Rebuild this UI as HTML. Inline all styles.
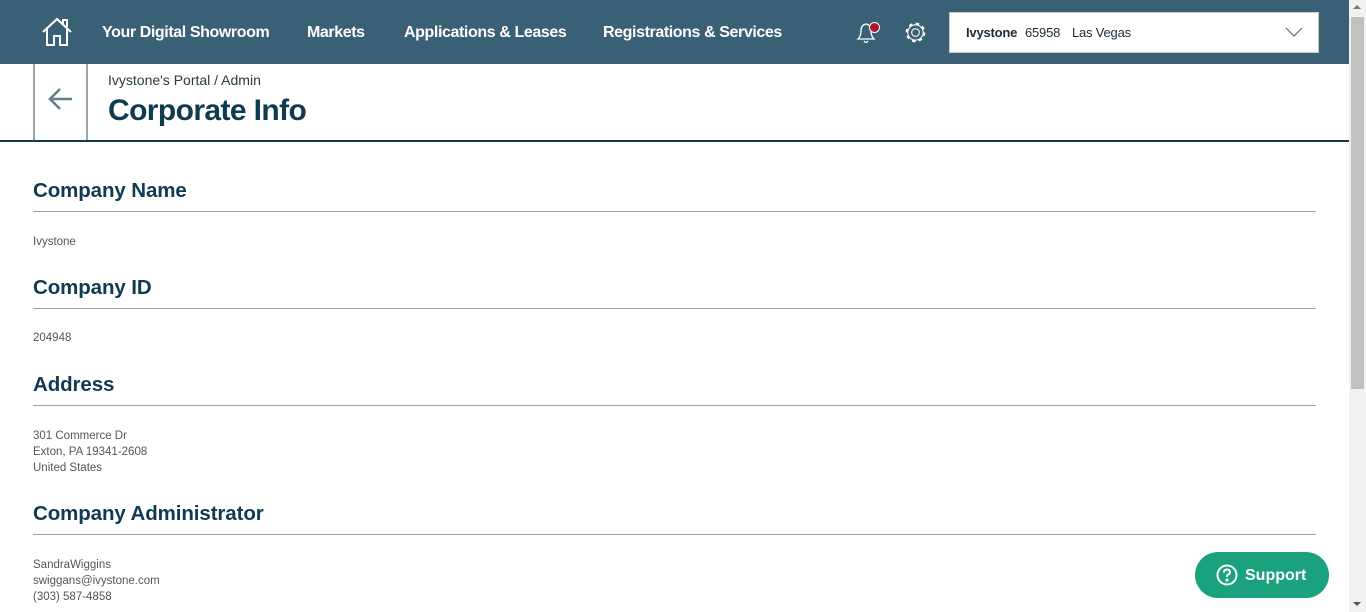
<!DOCTYPE html>
<html><head><meta charset="utf-8"><style>
*{margin:0;padding:0;box-sizing:border-box}
body{width:1366px;height:612px;overflow:hidden;font-family:"Liberation Sans",sans-serif;background:#fff;position:relative}
.hdr{position:absolute;left:0;top:0;width:1349px;height:64px;background:#3a6075}
.nav{position:absolute;top:24px;color:#fff;font-size:16px;font-weight:bold;letter-spacing:-0.4px;white-space:nowrap}
.sel{position:absolute;left:949px;top:12px;width:370px;height:41px;background:#fff;border:1px solid #ccc}
.sel span{position:absolute;top:12px;font-size:13px;color:#1c2b36;letter-spacing:-0.2px}
.sb{position:absolute;left:1349px;top:0;width:17px;height:612px;background:#f1f1f1}
.thumb{position:absolute;left:1351px;top:17px;width:13px;height:372px;background:#c1c1c1}
.tb{position:absolute;left:0;top:64px;width:1349px;height:78px;border-bottom:2px solid #0f3b50}
.back{position:absolute;left:33px;top:0;width:55px;height:76px;border-left:2px solid #9aa5ab;border-right:2px solid #9aa5ab}
h2{position:absolute;left:33px;font-size:20.5px;color:#0f3b50;font-weight:bold;letter-spacing:-0.1px}
.ln{position:absolute;left:33px;width:1283px;height:1px;background:#9ca3a7}
.tx{position:absolute;left:33px;font-size:11.5px;color:#555;line-height:16px}
.sup{position:absolute;left:1195px;top:552px;width:134px;height:46px;border-radius:23px;background:#1aa27c;color:#fff;font-weight:bold;font-size:16px}
</style></head><body>
<div class="hdr">
<svg style="position:absolute;left:41px;top:17px" width="32" height="30" viewBox="0 0 32 30" fill="none" stroke="#fff" stroke-width="2"><path d="M2 15 L16 2 L30 15 M6 12 V28 H13 V19 H19 V28 H26 V12 M22 7 V3 H26 V10"/></svg>
<div class="nav" style="left:102px">Your Digital Showroom</div>
<div class="nav" style="left:307px">Markets</div>
<div class="nav" style="left:404px">Applications &amp; Leases</div>
<div class="nav" style="left:603px">Registrations &amp; Services</div>
<svg style="position:absolute;left:855px;top:21px" width="26" height="24" viewBox="0 0 26 24" fill="none" stroke="#fff" stroke-width="1.3"><path d="M3 18 Q6 15 6 10 Q6 4 11 3 Q16 4 16 10 Q16 15 19 18 Z M9 20 Q11 23 13 20"/></svg>
<div style="position:absolute;left:869px;top:22px;width:11px;height:11px;border-radius:50%;background:#a5172a;border:1px solid #fff"></div>
<svg style="position:absolute;left:904px;top:21px" width="23" height="23" viewBox="0 0 24 24" fill="none" stroke="#fff"><circle cx="12" cy="12" r="4" stroke-width="1.1"/><circle cx="12" cy="12" r="8" stroke-width="1.1"/><circle cx="12" cy="12" r="9.3" stroke-width="2" stroke-dasharray="3.6 3.7" fill="none"/></svg>
<div class="sel"><span style="left:16px;font-weight:bold">Ivystone</span><span style="left:75px">65958</span><span style="left:122px">Las Vegas</span>
<svg style="position:absolute;left:335px;top:13px" width="18" height="12" viewBox="0 0 18 12" fill="none" stroke="#666" stroke-width="1.2"><path d="M1 2 L9 10 L17 2"/></svg></div>
</div>
<div class="sb"></div><div class="thumb"></div>
<div style="position:absolute;left:1353px;top:5px;width:0;height:0;border-left:4px solid transparent;border-right:4px solid transparent;border-bottom:4px solid #777"></div>
<div style="position:absolute;left:1353px;top:602px;width:0;height:0;border-left:4px solid transparent;border-right:4px solid transparent;border-top:4px solid #555"></div>
<div class="tb">
<div class="back"><svg style="position:absolute;left:13px;top:22px" width="26" height="26" viewBox="0 0 26 26" fill="none" stroke="#627d8b" stroke-width="2.5"><path d="M24 13 H3 M12 3 L2 13 L12 23"/></svg></div>
<div style="position:absolute;left:108px;top:8px;font-size:14px;color:#2a3a44">Ivystone's Portal / Admin</div>
<div style="position:absolute;left:108px;top:30px;font-size:30px;font-weight:bold;color:#0f3b50;letter-spacing:-0.6px">Corporate Info</div>
</div>
<h2 style="top:179px">Company Name</h2><div class="ln" style="top:211px"></div>
<div class="tx" style="top:234px">Ivystone</div>
<h2 style="top:276px">Company ID</h2><div class="ln" style="top:308px"></div>
<div class="tx" style="top:330px">204948</div>
<h2 style="top:373px">Address</h2><div class="ln" style="top:405px"></div>
<div class="tx" style="top:428px">301 Commerce Dr<br>Exton, PA 19341-2608<br>United States</div>
<h2 style="top:502px">Company Administrator</h2><div class="ln" style="top:534px"></div>
<div class="tx" style="top:557px">SandraWiggins<br>swiggans@ivystone.com<br>(303) 587-4858</div>
<div class="sup"><svg style="position:absolute;left:21px;top:12px" width="22" height="22" viewBox="0 0 22 22" fill="none" stroke="#fff" stroke-width="2"><circle cx="11" cy="11" r="9.5"/><path d="M8 8.5 Q8 5.5 11 5.5 Q14 5.5 14 8.3 Q14 10 11 11.3 V13"/><circle cx="11" cy="16" r="0.6" fill="#fff"/></svg><span style="position:absolute;left:50px;top:15px">Support</span></div>
</body></html>
